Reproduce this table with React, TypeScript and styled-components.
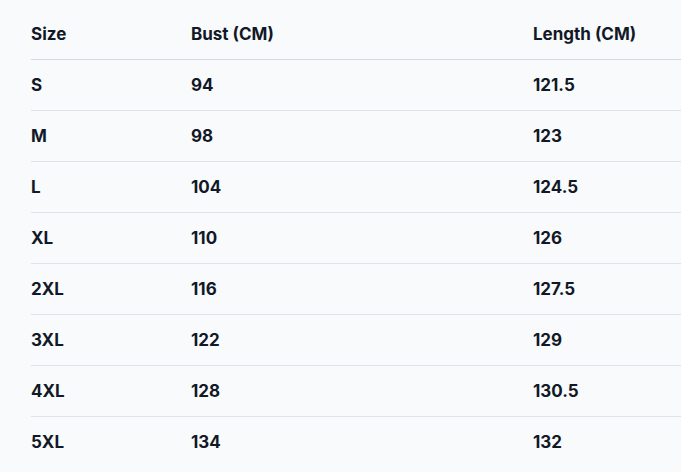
import React from "react";
import styled, { createGlobalStyle } from "styled-components";

const Global = createGlobalStyle`
  html, body {
    margin: 0;
    padding: 0;
    background: #f9fafb;
    overflow: hidden;
  }
  body {
    font-family: Inter, "Noto Sans", sans-serif;
    color: #111827;
  }
`;

const Page = styled.div`
  padding: 9px 0 0 31px;
`;

const Table = styled.table`
  border-collapse: collapse;
  width: 650px;
  table-layout: fixed;
`;

const HeadCell = styled.th<{ $w?: number }>`
  text-align: left;
  font-weight: 700;
  font-size: 17px;
  line-height: 24px;
  height: 50px;
  padding: 0;
  vertical-align: middle;
  white-space: nowrap;
  width: ${(p) => (p.$w ? `${p.$w}px` : "auto")};
  border-bottom: 1px solid #d5d9e0;
  box-sizing: border-box;
`;

const Row = styled.tr`
  border-bottom: 1px solid #e0e3e8;
  &:last-child {
    border-bottom: none;
  }
`;

const Cell = styled.td`
  font-weight: 700;
  font-size: 17px;
  line-height: 24px;
  height: 50px;
  padding: 0;
  vertical-align: middle;
  white-space: nowrap;
`;

const rows: [string, string, string][] = [
  ["S", "94", "121.5"],
  ["M", "98", "123"],
  ["L", "104", "124.5"],
  ["XL", "110", "126"],
  ["2XL", "116", "127.5"],
  ["3XL", "122", "129"],
  ["4XL", "128", "130.5"],
  ["5XL", "134", "132"],
];

export default function App() {
  return (
    <>
      <Global />
      <Page>
        <Table>
          <thead>
            <tr>
              <HeadCell $w={160}>Size</HeadCell>
              <HeadCell $w={342}>Bust (CM)</HeadCell>
              <HeadCell>Length (CM)</HeadCell>
            </tr>
          </thead>
          <tbody>
            {rows.map((r) => (
              <Row key={r[0]}>
                <Cell>{r[0]}</Cell>
                <Cell>{r[1]}</Cell>
                <Cell>{r[2]}</Cell>
              </Row>
            ))}
          </tbody>
        </Table>
      </Page>
    </>
  );
}
